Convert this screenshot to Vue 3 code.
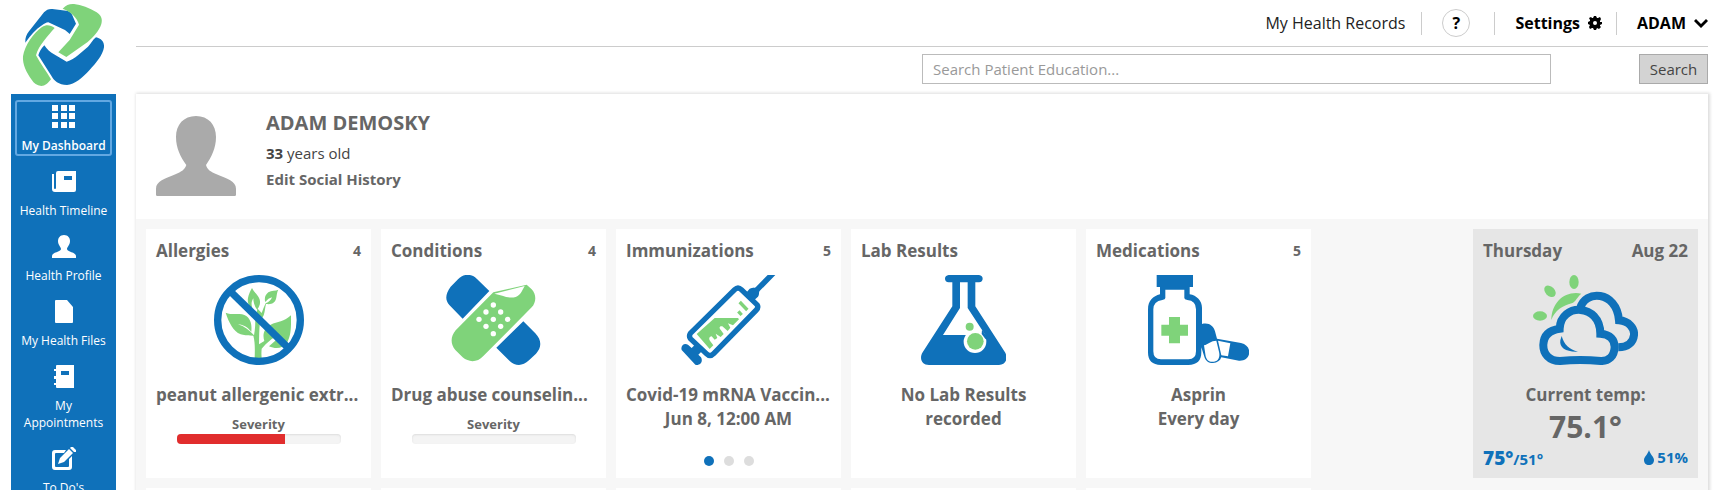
<script setup>
const nav = [
  { id: 'dashboard', label: 'My Dashboard' },
  { id: 'timeline', label: 'Health Timeline' },
  { id: 'profile', label: 'Health Profile' },
  { id: 'files', label: 'My Health Files' },
  { id: 'appointments', label: 'My Appointments' },
  { id: 'todos', label: "To Do's" },
]
const tiles = [
  { id: 'allergies', title: 'Allergies', count: 4, lines: ['peanut allergenic extr...'], severity: 66 },
  { id: 'conditions', title: 'Conditions', count: 4, lines: ['Drug abuse counselin...'], severity: 0 },
  { id: 'immunizations', title: 'Immunizations', count: 5, lines: ['Covid-19 mRNA Vaccin...', 'Jun 8, 12:00 AM'], pages: 3 },
  { id: 'labs', title: 'Lab Results', lines: ['No Lab Results', 'recorded'] },
  { id: 'medications', title: 'Medications', count: 5, lines: ['Asprin', 'Every day'] },
]
const dots = [[371, 255], [349, 276], [393, 276], [328, 298], [371, 298], [414, 298], [349, 319], [393, 319], [371, 341]]
</script>

<template>
  <div class="app">
    <aside class="side">
      <a class="brand" href="#" aria-label="Home">
        <svg class="logo" viewBox="66 9 249 252" aria-hidden="true">
          <path class="blue" d="M76 128C75 113 79 105 87 94L132 37C139 29 147 26 157 27L199 32C209 33 214 38 217 46L228 71L209 102C202 96 197 91 190 88L145 67C138 68 133 71 127 75C107 88 91 106 76 128Z" />
          <path class="green" d="M188 26C199 15 208 11 222 12C244 14 268 23 290 37C304 46 308 58 304 72C298 91 281 111 263 126L199 171L175 157L209 120L237 74C232 54 212 34 188 26Z" />
          <path class="green" d="M164 84C145 106 116 136 108 166C121 190 138 213 153 238C145 249 135 258 124 258C110 256 102 250 95 239C79 218 67 193 69 169C74 137 101 98 126 81C140 73 151 75 164 84Z" />
          <path class="blue" d="M115 166C118 156 123 146 133 136C141 148 150 156 162 163L200 185C213 182 224 174 234 166L264 140C273 131 278 119 288 112C302 115 314 125 312 142C308 166 290 187 268 211C248 233 224 254 201 255C176 255 162 243 153 226Z" />
        </svg>
      </a>
      <nav class="menu" aria-label="Main">
        <a v-for="(n, i) in nav" :key="n.id" href="#" class="item" :class="{ active: i === 0 }">
          <svg class="ico" viewBox="0 0 24 24" aria-hidden="true">
            <path v-if="n.id === 'dashboard'" d="M0 0h6v6H0zM9 0h6v6H9zM17 0h6v6h-6zM0 8h6v6H0zM9 8h6v6H9zM17 8h6v6h-6zM0 17h6v6H0zM9 17h6v6H9zM17 17h6v6h-6z" />
            <path v-else-if="n.id === 'timeline'" fill-rule="evenodd" d="M6 1H24V20Q24 22 22 22H3Q0 22 0 19V4H2V18Q2 19 3 19Q4 19 4 18V3Q4 1 6 1ZM12 6V10H20V6Z" />
            <path v-else-if="n.id === 'profile'" d="M12 0C16 0 18 3 18 6C18 10 15 12 15 14C15 17 24 17 24 21V23H0V21C0 17 9 17 9 14C9 12 6 10 6 6C6 3 8 0 12 0Z" />
            <path v-else-if="n.id === 'files'" d="M4 0H15L21 7V22Q21 23 20 23H4Q3 23 3 22V1Q3 0 4 0Z" />
            <path v-else-if="n.id === 'appointments'" fill-rule="evenodd" d="M5 0H22V23H5Q4 23 4 22V20H2V18H4V14H2V11H4V6H2V4H4V1Q4 0 5 0ZM9 6V10H17V6Z" />
            <g v-else>
              <path d="M3 3H14L12 6H4Q3 6 3 7V19Q3 20 4 20H16Q17 20 17 19V12L20 9V20Q20 23 17 23H3Q0 23 0 20V6Q0 3 3 3Z" />
              <path d="M6 17L8 11L17 2L21 6L12 15ZM18 1L19 0H21L24 3V5L22 5Z" />
            </g>
          </svg>
          <span>{{ n.label }}</span>
        </a>
      </nav>
    </aside>

    <main class="main">
      <header class="top">
        <a class="records" href="#">My Health Records</a>
        <span class="sep"></span>
        <button class="help" type="button" aria-label="Help">?</button>
        <span class="sep"></span>
        <button class="drop" type="button">
          Settings
          <svg class="mini" viewBox="0 0 14 14" aria-hidden="true">
            <path fill-rule="evenodd" d="M6 0H8L9 2L10 2L12 1L13 3L12 5L12 6L14 6V8L12 9L12 10L13 11L11 13L9 12L8 14H6L5 12L4 12L2 13L1 11L2 9L0 8V6L2 5L2 4L1 2L3 1L4 2L5 2ZM7 5A2 2 0 1 0 7 9A2 2 0 1 0 7 5Z" />
          </svg>
        </button>
        <span class="sep"></span>
        <button class="drop" type="button">
          ADAM
          <svg class="mini" viewBox="0 0 14 14" aria-hidden="true"><path d="M0 5L2 3L7 8L12 3L14 5L7 12Z" /></svg>
        </button>
      </header>

      <form class="search" role="search" @submit.prevent>
        <input class="query" type="text" placeholder="Search Patient Education..." aria-label="Search Patient Education" />
        <button class="go" type="submit">Search</button>
      </form>

      <section class="panel">
        <div class="person">
          <svg class="avatar" viewBox="78 78 240 240" aria-hidden="true">
            <path d="M198 78C235 78 258 104 258 141C258 175 244 202 228 225C232 240 244 246 258 252C292 266 318 274 318 296V314Q318 318 314 318H82Q78 318 78 314V296C78 274 104 266 138 252C152 246 164 240 169 225C152 202 138 175 138 141C138 104 161 78 198 78Z" />
          </svg>
          <div class="facts">
            <h1>ADAM DEMOSKY</h1>
            <p><b>33</b> years old</p>
            <a href="#">Edit Social History</a>
          </div>
        </div>

        <div class="board">
          <article v-for="t in tiles" :key="t.id" class="tile">
            <div class="head"><h2>{{ t.title }}</h2><span v-if="t.count" class="count">{{ t.count }}</span></div>

            <svg v-if="t.id === 'allergies'" class="art" viewBox="235 165 270 270" aria-hidden="true">
              <path class="green" d="M357 414C358 386 358 365 353 347C340 346 330 348 315 343C292 333 280 308 270 278C292 287 316 276 333 289C349 302 348 322 347 335C336 323 325 314 307 313C326 319 340 330 355 346C359 326 359 308 359 291L365 269C358 261 353 250 353 235C346 246 347 256 350 264C338 262 335 244 337 234C339 222 344 213 349 204C356 219 372 227 373 244C374 253 370 261 366 266L378 279C382 269 385 260 390 250C400 246 406 240 409 232C401 234 396 238 389 246C385 235 389 224 398 217C408 211 420 213 428 209C421 221 425 238 415 247C408 253 400 253 391 252C388 263 388 275 384 286L373 307C370 329 371 350 370 373L386 363C379 342 387 323 405 314C425 305 446 305 466 286C466 313 468 345 454 368C442 386 420 388 400 379L417 364L434 346L409 356L390 373L378 386C377 397 377 405 378 414Z" />
              <circle class="ring" cx="370" cy="300" r="124" />
              <path class="bar" d="M286 216L456 382" />
            </svg>

            <svg v-else-if="t.id === 'conditions'" class="art" viewBox="229 165 284 270" aria-hidden="true">
              <path class="blue" d="M279 296L239 255C224 238 229 219 243 200L265 178C281 160 306 160 322 177L359 213ZM461 304L497 340C517 361 516 383 499 401L478 421C458 440 437 438 420 423L380 383Z" />
              <path class="green" d="M371 217L471 194L486 208C501 223 500 247 486 262L341 408C323 428 298 428 279 412L257 390C241 371 243 349 258 331Z" />
              <path class="white" d="M374 221L465 198C456 214 452 226 438 231C416 237 397 225 374 221Z" />
              <circle v-for="(d, k) in dots" :key="k" class="white" :cx="d[0]" :cy="d[1]" r="8" />
            </svg>

            <svg v-else-if="t.id === 'immunizations'" class="art" viewBox="229 165 283 270" aria-hidden="true">
              <path class="barrel" d="M257 340L390 209Q400 199 410 209L457 254Q463 262 455 270L327 401Q316 412 305 401L257 356Q252 348 257 340Z" />
              <path class="blue" d="M426 217L435 206C444 202 450 205 453 202L489 165H512L467 211C460 218 466 222 460 230L449 240ZM231 390C227 378 238 367 250 374L261 384L273 372L293 392L281 404L289 412C297 426 284 438 272 434L231 390Z" />
              <path class="green" d="M276 342L330 294H400L403 298L385 316L370 310L377 323L369 333L353 319C343 318 343 325 349 331L357 342L348 351L333 341L338 354L330 359L321 349C312 350 312 359 318 365L326 376L315 387Z" />
              <path class="marks" d="M405 246L428 270M401 274L411 285" />
            </svg>

            <svg v-else-if="t.id === 'labs'" class="art" viewBox="242 165 257 270" aria-hidden="true">
              <path class="blue" fill-rule="evenodd" d="M325 165H416Q427 167 427 176Q427 185 416 187H405V259L494 397C505 415 496 435 476 435H266C244 435 236 415 247 397L336 259V187H325Q314 185 314 176Q314 167 325 165ZM359 187V264L308 345H435L382 264V187Z" />
              <circle class="white" cx="404" cy="365" r="34" />
              <path class="blue" d="M425 329L440 350L436 358L424 342Z" />
              <circle class="green" cx="405" cy="364" r="25" />
              <circle class="green" cx="388" cy="320" r="12" />
            </svg>

            <svg v-else class="art" viewBox="219 165 304 270" aria-hidden="true">
              <path class="blue" d="M245 165H354V201H344V223C365 226 381 243 381 263V312C402 307 415 317 420 334L426 356L498 369C515 373 523 384 523 398C521 414 510 423 492 422L439 412C435 423 427 428 414 429C400 429 392 422 388 410L379 382V397C379 422 366 435 340 435H258C232 435 219 422 219 397V269C219 241 234 229 255 223V201H245Z" />
              <path class="white" d="M271 209H328V234Q328 239 337 240Q363 242 363 268V394Q363 418 340 418H258Q235 418 235 394V268Q235 244 262 240Q271 239 271 234ZM387 376C399 373 408 362 424 362L432 395C436 411 430 423 417 425C404 427 396 423 392 409ZM429 362L466 370L459 409L439 406Z" />
              <path class="green" d="M282 291H315V314H339V347H315V370H282V347H259V314H282Z" />
            </svg>

            <div class="text" :class="{ clipped: t.lines[0].endsWith('...') }"><p v-for="l in t.lines" :key="l">{{ l }}</p></div>
            <div v-if="t.severity !== undefined" class="severity">
              <span>Severity</span>
              <div class="track"><div class="fill" :style="{ width: t.severity + '%' }"></div></div>
            </div>
            <div v-if="t.pages" class="pages">
              <button v-for="p in t.pages" :key="p" type="button" :class="{ on: p === 1 }" :aria-label="'Page ' + p"></button>
            </div>
          </article>

          <article class="tile weather">
            <div class="head"><h2>Thursday</h2><h2>Aug 22</h2></div>
            <svg class="art" viewBox="219 165 315 270" aria-hidden="true">
              <ellipse class="green" cx="342" cy="186" rx="14" ry="21" />
              <ellipse class="green" cx="270" cy="214" rx="14" ry="20" transform="rotate(-45 270 214)" />
              <ellipse class="green" cx="240" cy="288" rx="21" ry="14" />
              <path class="green" d="M274 300C275 247 315 211 364 221C351 231 347 246 335 250C309 256 284 272 274 300Z" />
              <path class="cloud" d="M360 267C373 208 470 211 477 301C507 303 524 325 522 345C520 367 503 382 475 382" />
              <path class="cloud" d="M299 326C302 248 421 249 421 341C452 343 464 360 464 381C463 409 446 424 422 423C378 419 343 419 300 423C267 423 249 401 250 374C251 343 270 330 299 326Z" />
              <path class="blue" d="M305 348C312 374 328 389 354 395C320 397 297 384 301 361Z" />
            </svg>
            <div class="text"><p>Current temp:</p></div>
            <p class="now">75.1°</p>
            <div class="foot">
              <span class="range"><b>75°</b>/51°</span>
              <span class="rain">
                <svg class="drop-ico" viewBox="0 0 10 15" aria-hidden="true"><path class="blue" d="M5 0C6 4 10 7 10 10C10 13 8 15 5 15C2 15 0 13 0 10C0 7 4 4 5 0Z" /></svg>51%
              </span>
            </div>
          </article>
        </div>
        <div class="board next">
          <article v-for="k in 5" :key="k" class="tile"></article>
        </div>
      </section>
    </main>
  </div>
</template>

<style>
body { margin: 0; background: #fff; }
</style>

<style scoped>
* { box-sizing: border-box; }
.app {
  display: flex;
  height: 100vh;
  overflow: hidden;
  padding: 0 18px 0 11px;
  gap: 20px;
  font-family: "Open Sans", "Noto Sans", sans-serif;
  font-size: 15px;
  color: #333;
}
h1, h2, p { margin: 0; }
a { color: inherit; text-decoration: none; }
button { font: inherit; color: inherit; padding: 0; border: 0; background: none; cursor: pointer; }
svg { display: block; }
.blue { fill: #0f71ba; }
.green { fill: #7fd37a; }
.white { fill: #fff; }

.side { flex: 0 0 105px; display: flex; flex-direction: column; }
.brand { flex: none; height: 94px; padding-top: 3px; }
.logo { width: 83px; height: 84px; margin: 0 auto; }
.menu { flex: 1; background: #0f71ba; color: #fff; padding: 6px 4px; display: flex; flex-direction: column; gap: 9px; }
.item {
  flex: none;
  display: flex;
  flex-direction: column;
  align-items: center;
  gap: 8px;
  padding: 3px 0 0;
  border: 2px solid transparent;
  border-radius: 3px;
  font-size: 12px;
  line-height: 17px;
  text-align: center;
}
.item.active { border-color: #62a8e2; font-weight: 600; }
.ico { width: 24px; height: 24px; fill: #fff; }

.main { flex: 1; min-width: 0; display: flex; flex-direction: column; }
.top {
  flex: none;
  height: 47px;
  border-bottom: 1px solid #ccc;
  display: flex;
  align-items: center;
  justify-content: flex-end;
  font-size: 16px;
  color: #000;
}
.records { color: #222; }
.sep { width: 1px; height: 23px; margin: 0 20px 0 16px; background: #ccc; }
.help { width: 28px; height: 28px; border: 1px solid #ccc; border-radius: 50%; font-weight: 700; }
.help + .sep { margin-left: 24px; }
.drop { display: flex; align-items: center; gap: 8px; font-weight: 700; }
.drop + .sep { margin-left: 14px; }
.mini { width: 14px; height: 14px; }

.search { flex: none; display: flex; height: 47px; padding: 7px 0 10px; }
.query {
  width: 40%;
  margin-left: 50%;
  padding: 0 10px;
  border: 1px solid #bbb;
  font: inherit;
  color: #333;
  background: #fff;
}
.query::placeholder { color: #999; opacity: 1; }
.go { width: 69px; margin-left: auto; background: #d3d3d3; border: 1px solid #aaa; color: #444; }

.panel { flex: 1; background: #f7f7f7; box-shadow: 1px 0 3px 1px #ddd; }
.person { display: flex; gap: 30px; height: 125px; padding: 22px 20px 0; background: #fff; }
.avatar { width: 80px; height: 80px; fill: #aaa; }
.facts { display: flex; flex-direction: column; color: #444; margin-top: -7px; }
.facts h1 { font-size: 20px; line-height: 28px; font-weight: 700; color: #666; }
.facts p { line-height: 26px; margin-top: 3px; }
.facts a { line-height: 26px; font-weight: 700; color: #666; }

.board { display: flex; gap: 10px; padding: 10px 10px 0; }
.tile {
  flex: 0 0 225px;
  min-width: 0;
  height: 249px;
  padding: 10px 10px 0;
  background: #fff;
  color: #666;
  font-weight: 700;
}
.head { display: flex; justify-content: space-between; height: 36px; line-height: 24px; }
.head h2 { font-size: 17px; font-weight: 700; }
.count { font-size: 14px; }
.art { height: 90px; margin: 0 auto 18px; }
.text { font-size: 17px; line-height: 24px; text-align: center; white-space: nowrap; }
.clipped p:first-child { text-align: left; }
.severity { display: flex; flex-direction: column; align-items: center; padding-top: 7px; font-size: 13px; line-height: 20px; }
.track { width: 80%; height: 10px; border-radius: 4px; overflow: hidden; background: #f4f4f4; box-shadow: inset 0 1px 2px #ddd; }
.fill { height: 100%; background: #e12d2d; }
.pages { display: flex; justify-content: center; gap: 10px; margin-top: 25px; }
.pages button { width: 10px; height: 10px; border-radius: 50%; background: #ddd; }
.pages .on { background: #0f71ba; }
.ring { fill: none; stroke: #0f71ba; stroke-width: 22; }
.bar { stroke: #0f71ba; stroke-width: 22; }
.barrel { fill: #fff; stroke: #0f71ba; stroke-width: 16; }
.marks { stroke: #7fd37a; stroke-width: 10; }
.cloud { fill: none; stroke: #0f71ba; stroke-width: 24; }

.weather { margin-left: auto; background: #e6e6e6; }
.now { font-size: 30px; line-height: 40px; text-align: center; }
.foot { display: flex; justify-content: space-between; align-items: baseline; line-height: 20px; color: #0f71ba; }
.range b { font-size: 19px; }
.rain { display: flex; align-items: center; gap: 3px; }
.drop-ico { width: 10px; height: 15px; }
</style>
